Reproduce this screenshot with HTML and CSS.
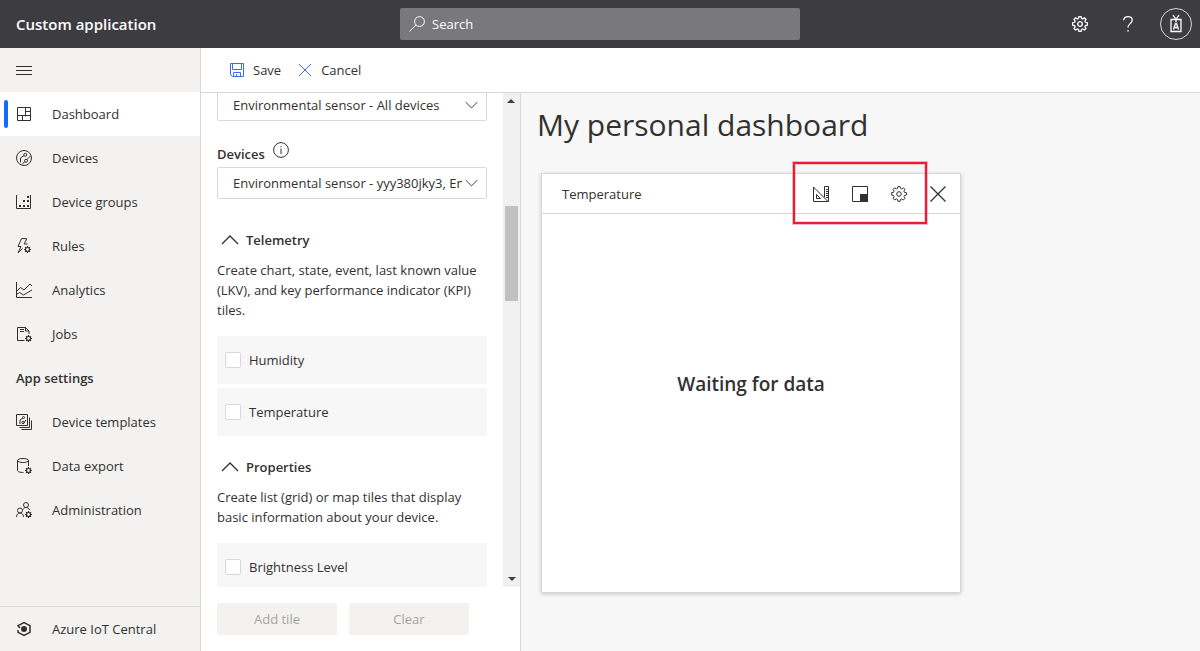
FILE: index.html
```html
<!DOCTYPE html>
<html lang="en">
<head>
<meta charset="utf-8">
<title>Custom application</title>
<meta name="viewport" content="width=device-width, initial-scale=1">
<link rel="stylesheet" href="styles.css">
</head>
<body>
<svg class="defs" aria-hidden="true">
  <symbol id="gear" viewBox="0 0 16 16">
    <path d="M6.900.600h2.200l.4 1.800 1.200.5 1.700-1.100 1.600 1.600-1.100 1.700.5 1.200 2 .4v2.400l-2 .4-.5 1.200 1.100 1.700-1.600 1.600-1.700-1.100-1.200.5-.4 1.900H6.900l-.4-1.900-1.200-.5-1.700 1.100L2 12.400l1.100-1.700-.5-1.200-2-.4V6.700l2-.4.5-1.200L2 3.400l1.600-1.600 1.700 1.100 1.200-.5z"/>
    <circle cx="8" cy="8" r="2.300"/>
  </symbol>
  <symbol id="small-gear" viewBox="0 0 6 6">
    <circle cx="3" cy="3" r="1.700"/>
    <path d="M3 0v1.300M3 4.700V6M0 3h1.300M4.700 3H6M.9.900l.9.900M4.200 4.200l.9.900M5.100.900l-.9.900M1.800 4.200l-.9.900"/>
  </symbol>
  <symbol id="chevron" viewBox="0 0 18 10"><path d="M1 9l8-8 8 8"/></symbol>
</svg>

<header class="topbar">
  <a class="brand" href="#">Custom application</a>
  <div class="search">
    <svg class="icon" viewBox="0 0 16 16" aria-hidden="true"><circle cx="10.500" cy="5.500" r="4.900"/><path d="M7 9L.5 15.500"/></svg>
    <input class="search-input" type="text" placeholder="Search" aria-label="Search">
  </div>
  <div class="top-actions">
    <button class="top-button" type="button" aria-label="Settings"><svg class="icon bold" aria-hidden="true"><use href="#gear"/></svg></button>
    <button class="top-button" type="button" aria-label="Help"><svg class="icon bold" viewBox="0 0 16 16" aria-hidden="true"><path d="M3.700 4.200C3.900 2 5.500.7 8 .7c2.600 0 4.200 1.300 4.200 3.500 0 3.400-4.300 3.500-4.300 7.300M7.200 14.800h1.600"/></svg></button>
    <button class="avatar" type="button" aria-label="Account"><svg class="badge-icon" viewBox="0 0 12 18" aria-hidden="true"><path d="M1 4.500h10v12H1zM3 0l3 4.500L9 0M6 3v4M3.500 14.500l2-6h1l2 6M4.500 12.500h3"/></svg></button>
  </div>
</header>

<div class="shell">
  <nav class="sidebar" aria-label="Main">
    <button class="menu-button" type="button" aria-label="Collapse menu"><svg class="icon" viewBox="0 0 16 16" aria-hidden="true"><path d="M0 4.500h16M0 8.500h16M0 12.500h16"/></svg></button>
    <a class="nav-item active" href="#" aria-current="page">
      <svg class="icon" viewBox="0 0 16 16" aria-hidden="true"><path d="M1.500 1.500h13v13h-13zM9.500 1.500v9M1.500 9.500h13M9.500 5.500h5M6.500 9.500v5"/></svg>Dashboard</a>
    <a class="nav-item" href="#">
      <svg class="icon" viewBox="0 0 16 16" aria-hidden="true"><circle cx="8" cy="8" r="7.500"/><circle cx="9.300" cy="4.800" r="1.500"/><circle cx="10" cy="10.800" r="1.500"/><path d="M8 5.500L4.500 8v4.500M11 9.600L14.500 6M8.800 11.500L6 14.500"/></svg>Devices</a>
    <a class="nav-item" href="#">
      <svg class="icon" viewBox="0 0 16 16" aria-hidden="true"><path d="M.5 1v13.500h14V1"/><path class="solid" d="M3 11h2v2H3zM7 11h2v2H7zM11 11h2v2h-2zM7 6h2v2H7zM11 6h2v2h-2zM11 2h2v2h-2z"/></svg>Device groups</a>
    <a class="nav-item" href="#">
      <svg class="icon" viewBox="0 0 16 16" aria-hidden="true"><path d="M11.500 6H8.200L10.700.6H5.500L2 8.500h3L2 14.800l4.500-4.300"/><use href="#small-gear" x="8" y="8" width="7" height="7"/></svg>Rules</a>
    <a class="nav-item" href="#">
      <svg class="icon" viewBox="0 0 16 16" aria-hidden="true"><path d="M.5 0v15.500H16M.5 9.500l4-4L8 8l6-6 2 2M.5 12.500l3-2 4 2.500L16 8"/></svg>Analytics</a>
    <a class="nav-item" href="#">
      <svg class="icon" viewBox="0 0 16 16" aria-hidden="true"><path d="M8.500 14.500h-7v-13h8l3.500 3.500v3M9.500 1.500V5H13M4 3.500h4M4 5.500h4"/><use href="#small-gear" x="9" y="9" width="7" height="7"/></svg>Jobs</a>
    <h2 class="nav-heading">App settings</h2>
    <a class="nav-item" href="#">
      <svg class="icon" viewBox="0 0 16 16" aria-hidden="true"><path d="M.5.5h11v11H.5zM3.500 13.500h10v-10M5.500 15.500h10v-9M4 10V6l3-2M7 10l3-4"/><circle cx="7.500" cy="3.500" r="1"/><circle cx="7" cy="8.500" r="1.200"/></svg>Device templates</a>
    <a class="nav-item" href="#">
      <svg class="icon" viewBox="0 0 16 16" aria-hidden="true"><ellipse cx="7" cy="2.500" rx="5.500" ry="2"/><path d="M1.500 2.500v10c0 1.300 2.500 2 6 2M12.500 2.500V8"/><use href="#small-gear" x="9" y="9" width="7" height="7"/></svg>Data export</a>
    <a class="nav-item" href="#">
      <svg class="icon" viewBox="0 0 16 16" aria-hidden="true"><circle cx="10" cy="3" r="2.500"/><circle cx="4" cy="8.500" r="2.500"/><path d="M.5 15c0-2.500 1.500-4 3.500-4s3.500 1.500 3.500 4M7 7.500c.6-1.300 1.700-2 3-2 1.800 0 3 1 3.500 2.500"/><use href="#small-gear" x="9" y="9" width="7" height="7"/></svg>Administration</a>
    <a class="nav-item nav-footer" href="#">
      <svg class="icon thick" viewBox="0 0 16 16" aria-hidden="true"><path d="M2 9v2.300L8 14.500l6-3.200V4.700L8 1.500 2 4.700 4 7"/><circle class="solid" cx="8" cy="8" r="3"/></svg>Azure IoT Central</a>
  </nav>

  <div class="workspace">
    <div class="toolbar">
      <button class="command" type="button"><svg class="icon" viewBox="0 0 16 16" aria-hidden="true"><path d="M1.500 1.500h13v13h-11l-2-2zM3.500 1.500v6h9v-6M4.500 14.500v-4h7v4M7.500 12v2.500"/></svg>Save</button>
      <button class="command" type="button"><svg class="icon" viewBox="0 0 16 16" aria-hidden="true"><path d="M2 2l12 12M14 2L2 14"/></svg>Cancel</button>
    </div>

    <div class="content">
      <aside class="panel">
        <div class="scroll-area">
          <form class="fields">
            <div class="select-box">
              <select class="select" aria-label="Device group"><option>Environmental sensor - All devices</option></select>
              <svg class="chevron down" aria-hidden="true"><use href="#chevron"/></svg>
            </div>
            <div class="field-label">
              <label for="devices">Devices</label>
              <svg class="icon" viewBox="0 0 16 16" aria-hidden="true"><circle cx="8" cy="8" r="7.400"/><path d="M8 6.500V12M8 4v1.200"/></svg>
            </div>
            <div class="select-box">
              <select class="select" id="devices"><option>Environmental sensor - yyy380jky3, Environmental sensor</option></select>
              <svg class="chevron down" aria-hidden="true"><use href="#chevron"/></svg>
            </div>

            <section class="group first">
              <button class="group-title" type="button" aria-expanded="true"><svg class="chevron" aria-hidden="true"><use href="#chevron"/></svg>Telemetry</button>
              <p class="group-text">Create chart, state, event, last known value (LKV), and key performance indicator (KPI) tiles.</p>
              <label class="option"><input class="check" type="checkbox">Humidity</label>
              <label class="option"><input class="check" type="checkbox">Temperature</label>
            </section>

            <section class="group">
              <button class="group-title" type="button" aria-expanded="true"><svg class="chevron" aria-hidden="true"><use href="#chevron"/></svg>Properties</button>
              <p class="group-text">Create list (grid) or map tiles that display basic information about your device.</p>
              <label class="option"><input class="check" type="checkbox">Brightness Level</label>
            </section>
          </form>
          <div class="scrollbar" aria-hidden="true">
            <span class="arrow up"></span>
            <span class="track"><span class="thumb"></span></span>
            <span class="arrow"></span>
          </div>
        </div>
        <div class="panel-footer">
          <button class="action" type="button" disabled>Add tile</button>
          <button class="action" type="button" disabled>Clear</button>
        </div>
      </aside>

      <main class="board">
        <h1 class="board-title">My personal dashboard</h1>
        <article class="tile">
          <header class="tile-header">
            <h2 class="tile-title">Temperature</h2>
            <div class="tile-tools">
              <button class="tool" type="button" aria-label="Change visualization"><svg class="icon" viewBox="0 0 16 16" aria-hidden="true"><path d="M.5 1v14.500h15V.5h-4v11M.5 1l14 14M3.500 8.500v4h4zM13 3.500h2.500M13 5.500h2.500M13 7.500h2.500M13 9.500h2.500M13 11.500h2.500"/></svg></button>
              <button class="tool" type="button" aria-label="Resize"><svg class="icon" viewBox="0 0 16 16" aria-hidden="true"><path d="M.5.5h15v15H.5z"/><path class="solid" d="M8 8h8v8H8z"/></svg></button>
              <button class="tool" type="button" aria-label="Configure"><svg class="icon" aria-hidden="true"><use href="#gear"/></svg></button>
              <span class="highlight"></span>
            </div>
            <button class="tool" type="button" aria-label="Remove"><svg class="icon bold" viewBox="0 0 16 16" aria-hidden="true"><path d="M.5.500l15 15M15.500.500l-15 15"/></svg></button>
          </header>
          <p class="tile-body">Waiting for data</p>
        </article>
      </main>
    </div>
  </div>
</div>
</body>
</html>
```

FILE: styles.css
```css
*, *::before, *::after { box-sizing: border-box; }

body {
  display: flex;
  flex-direction: column;
  height: 100vh;
  margin: 0;
  overflow: hidden;
  background: #fff;
  color: #323130;
  font: 13px/20px "Open Sans", "Noto Sans", sans-serif;
}

button, input, select { color: inherit; font: inherit; }
button { padding: 0; border: 0; background: none; }
a { color: inherit; text-decoration: none; }
h1, h2, p { margin: 0; font: inherit; }

.defs { position: absolute; width: 0; height: 0; }

.icon {
  flex: none;
  width: 16px;
  height: 16px;
  fill: none;
  stroke: currentColor;
  stroke-width: 1;
}
.icon.bold { stroke-width: 1.3; }
.icon.thick { stroke-width: 1.5; }
.solid { fill: currentColor; stroke: none; }

/* Top bar */
.topbar {
  display: grid;
  grid-template-columns: 1fr minmax(0, 400px) 1fr;
  align-items: center;
  flex: none;
  height: 48px;
  background: #3d3c41;
  color: #fff;
}
.brand { padding-left: 16px; font-size: 15px; font-weight: 600; }
.search {
  display: flex;
  align-items: center;
  gap: 7px;
  height: 32px;
  padding: 0 9px;
  border-radius: 2px;
  background: #79797b;
}
.search-input {
  flex: 1;
  min-width: 0;
  padding: 0;
  border: 0;
  outline: 0;
  background: none;
}
.search-input::placeholder { color: #fff; opacity: 1; }
.top-actions { display: flex; justify-content: flex-end; align-items: center; padding-right: 8px; }
.top-button { display: grid; place-items: center; width: 48px; height: 48px; }
.avatar {
  display: grid;
  place-items: center;
  width: 32px;
  height: 32px;
  margin-left: 8px;
  border: 1px solid #d8d8d8;
  border-radius: 50%;
}
.badge-icon { width: 12px; height: 18px; fill: none; stroke: currentColor; stroke-width: 1.3; }

/* Sidebar */
.shell { display: flex; flex: 1; min-height: 0; }
.sidebar {
  display: flex;
  flex-direction: column;
  flex: none;
  width: 201px;
  border-right: 1px solid #d8d8d8;
  background: #f3f2f1;
}
.menu-button { display: flex; align-items: center; height: 44px; padding-left: 16px; }
.nav-item { display: flex; align-items: center; gap: 20px; height: 44px; padding-left: 16px; }
.nav-item.active { position: relative; background: #fff; }
.nav-item.active::before {
  content: "";
  position: absolute;
  left: 4px;
  width: 4px;
  height: 28px;
  border-radius: 2px;
  background: #136bfb;
}
.nav-heading { padding: 12px 16px; font-weight: 600; }
.nav-footer { height: 45px; margin-top: auto; border-top: 1px solid #d8d8d8; }

/* Workspace */
.workspace { display: flex; flex: 1; flex-direction: column; min-width: 0; }
.toolbar {
  display: flex;
  align-items: center;
  gap: 16px;
  flex: none;
  height: 45px;
  padding-left: 28px;
  border-bottom: 1px solid #d8d8d8;
}
.command { display: flex; align-items: center; gap: 8px; }
.command .icon { color: #3b6cf6; }
.content { display: flex; flex: 1; min-height: 0; }

/* Panel */
.panel {
  display: flex;
  flex-direction: column;
  flex: none;
  width: 320px;
  border-right: 1px solid #d8d8d8;
}
.scroll-area { display: flex; flex: 1; min-height: 0; overflow: hidden; }
.fields { flex: 1; min-width: 0; margin-top: -4px; padding: 0 16px; }
.select-box { display: grid; align-items: center; }
.select-box > * { grid-area: 1 / 1; }
.select {
  width: 100%;
  height: 32px;
  padding: 0 24px 0 15px;
  border: 1px solid #d8d8d8;
  border-radius: 2px;
  appearance: none;
  background: #fff;
  overflow: hidden;
}
.chevron { width: 18px; height: 10px; fill: none; stroke: currentColor; stroke-width: 1.3; }
.chevron.down { justify-self: end; width: 13px; height: 8px; margin-right: 9px; transform: rotate(180deg); pointer-events: none; }
.field-label { display: flex; align-items: flex-start; gap: 8px; padding: 21px 0 3px; font-weight: 600; }
.field-label label { padding-top: 2px; }
.group { padding-top: 11px; }
.group.first { padding-top: 21px; }
.group-title { display: flex; align-items: center; gap: 7px; height: 40px; padding-left: 4px; font-weight: 600; }
.group-text { padding-bottom: 16px; }
.option { display: flex; align-items: center; gap: 8px; height: 48px; padding-left: 8px; background: #f7f7f7; }
.option + .option { margin-top: 4px; }
.check {
  width: 16px;
  height: 16px;
  margin: 0;
  border: 1px solid #d8d8d8;
  border-radius: 2px;
  appearance: none;
  background: #fff;
}

.scrollbar { display: flex; flex-direction: column; flex: none; width: 17px; background: #f0f0f0; }
.arrow { display: grid; place-items: center; height: 17px; }
.arrow::before { content: ""; border: 4px solid transparent; border-top-color: #404040; border-bottom: 0; }
.arrow.up { transform: rotate(180deg); }
.track { flex: 1; padding: 96px 2px 0; }
.thumb { display: block; height: 95px; background: #c1c1c1; }

.panel-footer { display: flex; gap: 12px; flex: none; padding: 16px; }
.action { width: 120px; height: 32px; border-radius: 2px; background: #f3f2f1; color: #a6a4a2; }

/* Board */
.board { flex: 1; min-width: 0; padding: 12px 16px; background: #f7f7f7; }
.board-title { font-size: 30px; line-height: 40px; }
.tile {
  display: flex;
  flex-direction: column;
  max-width: 420px;
  margin: 28px 4px 0;
  aspect-ratio: 1;
  border: 1px solid #d8d8d8;
  background: #fff;
  box-shadow: 0 1px 4px rgba(0, 0, 0, 0.2);
}
.tile-header {
  display: flex;
  align-items: center;
  flex: none;
  height: 40px;
  padding: 0 3px 0 20px;
  border-bottom: 1px solid #d8d8d8;
}
.tile-title { flex: 1; font-weight: 500; }
.tile-tools { position: relative; display: flex; }
.tool { display: grid; place-items: center; width: 39px; height: 39px; }
.highlight {
  position: absolute;
  inset: -12px -9px -11px -8px;
  border: 2px solid #ed1c34;
  box-shadow: 0 0 0 1px rgba(237, 28, 52, 0.3), inset 0 0 0 1px rgba(237, 28, 52, 0.2);
  pointer-events: none;
}
.tile-body { display: grid; flex: 1; place-items: center; padding-bottom: 38px; font-size: 19px; font-weight: 600; }
```
